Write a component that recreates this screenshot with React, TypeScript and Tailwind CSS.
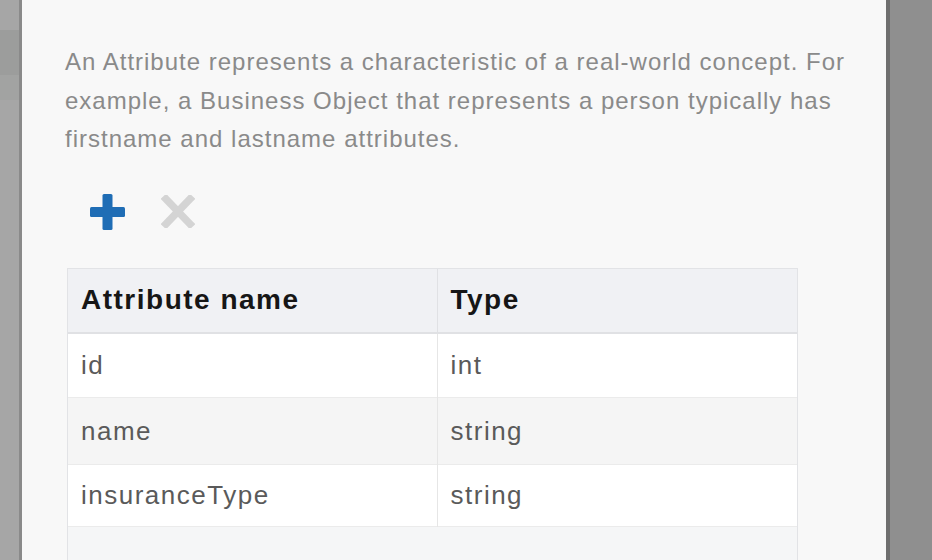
import React from "react";

const rows = [
  { name: "id", type: "int" },
  { name: "name", type: "string" },
  { name: "insuranceType", type: "string" },
];

function PlusIcon() {
  return (
    <svg width="35" height="36" viewBox="0 0 35 36">
      <rect x="12.5" y="0" width="10" height="36" rx="1.5" fill="#1f6db5" />
      <rect x="0" y="13" width="35" height="10" rx="1.5" fill="#1f6db5" />
    </svg>
  );
}

function CrossIcon() {
  return (
    <svg width="34" height="33" viewBox="0 0 34 33">
      <path d="M5 4 L29 29 M29 4 L5 29" stroke="#d4d4d4" strokeWidth="7.5" strokeLinecap="square" />
    </svg>
  );
}

export default function App() {
  return (
    <div
      className="flex h-[560px] w-[932px] overflow-hidden bg-[#8f8f8f]"
      style={{ fontFamily: '"Liberation Sans", Arial, sans-serif' }}
    >
      {/* backdrop, left */}
      <div className="flex w-[22px] shrink-0">
        <div className="flex w-[19px] flex-col bg-[#a6a6a6]">
          <div className="h-[30px]" />
          <div className="h-[45px] bg-[#9c9d9c]" />
          <div className="h-[25px] bg-[#a2a3a2]" />
        </div>
        <div className="w-[3px] bg-[#8a8a8a]" />
      </div>

      {/* dialog */}
      <div className="flex w-[864px] shrink-0 flex-col bg-[#f8f8f8] pl-[43px]">
        <p className="mt-[43px] text-[24px] leading-[38.5px] tracking-[1px] text-[#8a8a8a]">
          An Attribute represents a characteristic of a real-world concept. For
          <br />
          example, a Business Object that represents a person typically has
          <br />
          firstname and lastname attributes.
        </p>

        <div className="mt-[34px] flex items-center">
          <div className="ml-[24px] flex h-[38px] w-[36px] items-center justify-center">
            <PlusIcon />
          </div>
          <div className="ml-[36px] flex h-[38px] w-[34px] items-center justify-center">
            <CrossIcon />
          </div>
        </div>

        <div className="ml-[2px] mt-[37px] flex w-[731px] flex-1 flex-col border-x border-t border-[#e2e3e6] bg-[#f5f6f7]">
          <table className="w-full table-fixed border-collapse">
            <colgroup>
              <col className="w-[369px]" />
              <col />
            </colgroup>
            <thead>
              <tr className="h-[64px] border-b-2 border-[#e0e1e4] bg-[#f0f1f4] text-left">
                <th className="border-r border-[#e0e1e4] pl-[13px] text-[28px] font-bold tracking-[1.5px] text-[#161616]">
                  Attribute name
                </th>
                <th className="pl-[13px] text-[28px] font-bold tracking-[1.5px] text-[#161616]">
                  Type
                </th>
              </tr>
            </thead>
            <tbody>
              {rows.map((r, i) => (
                <tr
                  key={r.name}
                  className={
                    i === 1
                      ? "h-[67px] border-b border-[#ebebeb] bg-[#f5f5f5]"
                      : i === 0
                        ? "h-[65px] border-b border-[#ebebeb] bg-white"
                        : "h-[62px] border-b border-[#ebebeb] bg-white"
                  }
                >
                  <td className="border-r border-[#e6e6e6] pl-[13px] text-[26px] tracking-[1.5px] text-[#5a5a5a]">
                    {r.name}
                  </td>
                  <td className="pl-[13px] text-[26px] tracking-[1.5px] text-[#5a5a5a]">
                    {r.type}
                  </td>
                </tr>
              ))}
            </tbody>
          </table>
        </div>
      </div>

      {/* backdrop, right */}
      <div className="flex flex-1">
        <div className="w-[4px] bg-[#6f6f6f]" />
        <div className="flex-1 bg-[#8f8f8f]" />
      </div>
    </div>
  );
}
